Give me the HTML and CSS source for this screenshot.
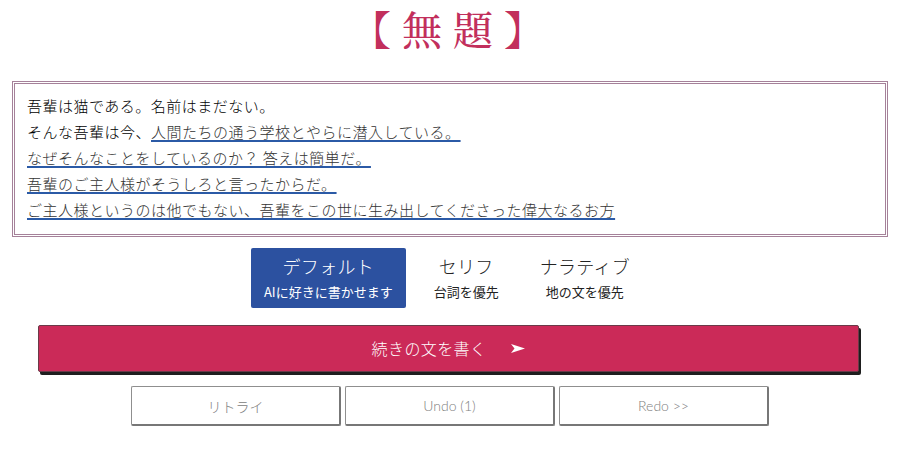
FILE: index.html
```html
<!DOCTYPE html>
<html lang="ja">
<head>
<meta charset="utf-8">
<title>無題</title>
<link rel="stylesheet" href="styles.css">
</head>
<body>
<h1 class="title">【無題】</h1>
<div class="story">
  <p class="story-text">吾輩は猫である。名前はまだない。<br>そんな吾輩は今、<span class="gen">人間たちの通う学校とやらに潜入している。</span><br><span class="gen">なぜそんなことをしているのか？ 答えは簡単だ。</span><br><span class="gen">吾輩のご主人様がそうしろと言ったからだ。</span><br><span class="gen">ご主人様というのは他でもない、吾輩をこの世に生み出してくださった偉大なるお方 </span></p>
</div>
<div class="modes">
  <div class="mode active">
    <div class="mode-name">デフォルト</div>
    <div class="mode-desc">AIに好きに書かせます</div>
  </div>
  <div class="mode">
    <div class="mode-name">セリフ</div>
    <div class="mode-desc">台詞を優先</div>
  </div>
  <div class="mode">
    <div class="mode-name">ナラティブ</div>
    <div class="mode-desc">地の文を優先</div>
  </div>
</div>
<div class="write-wrap">
  <button class="write">続きの文を書く<svg class="send" width="14" height="9" viewBox="0 0 14 9"><polygon points="0,0 14,4.5 0,9 3.5,4.5" fill="#fff"/></svg></button>
</div>
<div class="history">
  <button class="hist">リトライ</button>
  <button class="hist">Undo (1)</button>
  <button class="hist">Redo &gt;&gt;</button>
</div>
</body>
</html>
```
FILE: styles.css
```css
html, body {
  margin: 0;
  padding: 0;
  background: #fff;
}
body {
  width: 900px;
  font-family: "Noto Sans CJK JP", "Noto Sans", sans-serif;
  color: #222;
}
.title {
  margin: 0 0 25px;
  height: 56px;
  line-height: 56px;
  text-align: center;
  font-family: "Noto Serif CJK JP", "Noto Sans CJK JP", serif;
  font-weight: 500;
  font-size: 40px;
  letter-spacing: 11px;
  padding-left: 6px;
  color: #c22f5c;
}
.story {
  margin: 0 12px;
  border: 3px double #a58199;
  padding: 9px 12px 11px;
}
.story-text {
  margin: 0;
  font-size: 15px;
  font-weight: 300;
  letter-spacing: 0.5px;
  line-height: 26px;
  color: #000;
}
.gen {
  color: #333;
  text-decoration: underline 2px #2b5aa6;
  text-underline-offset: 2px;
  padding: 0 3px 0 2px;
  margin-left: -2px;
}
.modes {
  display: flex;
  justify-content: center;
  margin-top: 11px;
  padding-left: 9px;
}
.mode {
  padding: 5px 13px 3px;
  margin-right: 15px;
  text-align: center;
  border-radius: 2px;
  color: #222;
}
.mode.active {
  background: #2c51a0;
  color: #fff;
}
.mode-name {
  font-size: 18px;
  font-weight: 300;
  letter-spacing: 0.3px;
  line-height: 26px;
}
.mode-desc {
  font-size: 13px;
  line-height: 26px;
}
.write-wrap {
  margin: 17px 41px 0 38px;
}
.write {
  display: flex;
  align-items: center;
  justify-content: center;
  width: 100%;
  height: 47px;
  background: #cb2a58;
  border: 1px solid #6a3a48;
  border-radius: 2px;
  box-shadow: 2px 3px 0 #1e1e1e;
  color: #fff;
  font-family: "Noto Sans CJK JP", sans-serif;
  font-size: 16px;
  font-weight: 300;
  letter-spacing: 0.4px;
  padding: 0 0 2px;
}
.send {
  margin-left: 25px;
  margin-top: 2px;
}
.history {
  display: flex;
  justify-content: center;
  gap: 4px;
  margin-top: 14px;
}
.hist {
  width: 210px;
  height: 40px;
  background: #fff;
  border: 1px solid #8f8f8f;
  border-right: 2px solid #777;
  border-bottom: 2px solid #777;
  border-radius: 2px;
  color: #808080;
  font-family: Lato, "Noto Sans CJK JP", sans-serif;
  font-size: 14px;
  font-weight: 300;
  padding: 0;
}
```
